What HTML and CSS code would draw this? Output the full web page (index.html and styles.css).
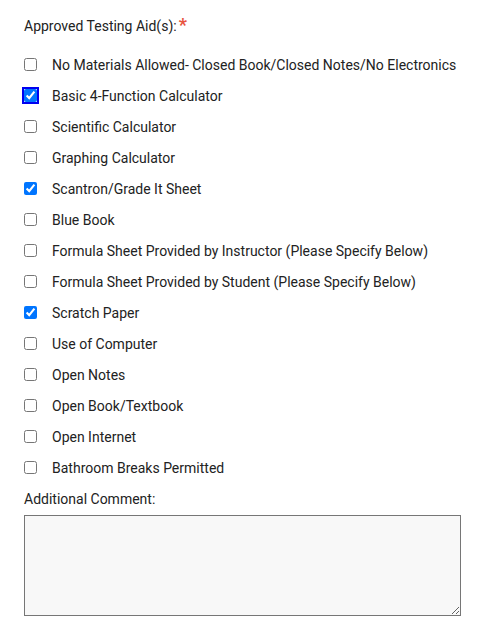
FILE: index.html
```html
<!DOCTYPE html>
<html lang="en">
<head>
  <meta charset="UTF-8">
  <title>Approved Testing Aids</title>
  <link rel="stylesheet" href="styles.css">
</head>
<body>
  <div class="form-section">
    <div class="field-label">Approved Testing Aid(s):<span class="required">*</span></div>
    <ul class="aid-list">
      <li><input type="checkbox" id="aid1"><label for="aid1">No Materials Allowed- Closed Book/Closed Notes/No Electronics</label></li>
      <li><input type="checkbox" id="aid2" class="focused" checked><label for="aid2">Basic 4-Function Calculator</label></li>
      <li><input type="checkbox" id="aid3"><label for="aid3">Scientific Calculator</label></li>
      <li><input type="checkbox" id="aid4"><label for="aid4">Graphing Calculator</label></li>
      <li><input type="checkbox" id="aid5" checked><label for="aid5">Scantron/Grade It Sheet</label></li>
      <li><input type="checkbox" id="aid6"><label for="aid6">Blue Book</label></li>
      <li><input type="checkbox" id="aid7"><label for="aid7">Formula Sheet Provided by Instructor (Please Specify Below)</label></li>
      <li><input type="checkbox" id="aid8"><label for="aid8">Formula Sheet Provided by Student (Please Specify Below)</label></li>
      <li><input type="checkbox" id="aid9" checked><label for="aid9">Scratch Paper</label></li>
      <li><input type="checkbox" id="aid10"><label for="aid10">Use of Computer</label></li>
      <li><input type="checkbox" id="aid11"><label for="aid11">Open Notes</label></li>
      <li><input type="checkbox" id="aid12"><label for="aid12">Open Book/Textbook</label></li>
      <li><input type="checkbox" id="aid13"><label for="aid13">Open Internet</label></li>
      <li><input type="checkbox" id="aid14"><label for="aid14">Bathroom Breaks Permitted</label></li>
    </ul>
    <label class="comment-label" for="comment">Additional Comment:</label>
    <textarea id="comment" class="comment-box"></textarea>
  </div>
</body>
</html>
```

FILE: styles.css
```css
body {
  font-family: Roboto, 'Liberation Sans', sans-serif;
  font-size: 14px;
  color: #222;
  background-color: #fff;
  margin: 0;
}

.form-section {
  padding: 16px 23px 0 24px;
}

.field-label {
  line-height: 20px;
  margin-bottom: 13px;
}

.required {
  color: #e8543f;
  font-size: 18px;
  font-weight: bold;
  margin-left: 2px;
  vertical-align: top;
  line-height: 18px;
}

.aid-list {
  list-style: none;
  margin: 0;
  padding: 0;
}

.aid-list li {
  display: flex;
  align-items: center;
  height: 31px;
}

.aid-list input[type="checkbox"] {
  width: 13px;
  height: 13px;
  margin: 0 15px 0 0;
  accent-color: #0075ff;
}

.aid-list input.focused {
  outline: 2px solid #0000f0;
  outline-offset: 0;
}

.comment-label {
  display: block;
  line-height: 20px;
  margin-top: 6px;
  margin-bottom: 6px;
}

.comment-box {
  display: block;
  box-sizing: border-box;
  width: 437px;
  height: 101px;
  background-color: #f8f8f8;
  border: 1px solid #767676;
  border-radius: 0;
  margin: 0;
}
```
